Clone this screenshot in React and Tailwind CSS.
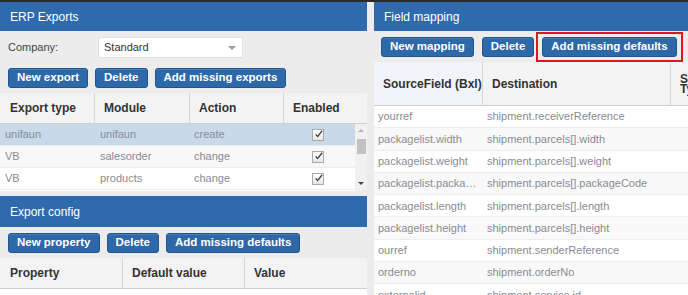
import React from 'react';

const btn =
  'h-[20px] px-[8px] rounded-[3px] bg-[#2d68a9] border border-[#22558f] text-white text-[11.5px] font-bold leading-none flex items-center shadow-[inset_0_1px_0_rgba(255,255,255,0.12)]';

function Button({ children }) {
  return <button className={btn}>{children}</button>;
}

function PanelHeader({ title, tall }) {
  return (
    <div
      className={`${tall ? 'h-[31px]' : 'h-[29px]'} shrink-0 bg-[#2e6aad] text-white text-[12px] flex items-center px-[10px]`}
    >
      {title}
    </div>
  );
}

function Check() {
  return (
    <span className="w-[12px] h-[12px] border border-[#a9a9a9] bg-gradient-to-b from-white to-[#e6e6e6] flex items-center justify-center">
      <svg width="11" height="10" viewBox="0 0 11 10" className="-mt-[2px] ml-[1px]">
        <path d="M2 5.5 L4.5 8 L10 1" fill="none" stroke="#444" strokeWidth="1.6" />
      </svg>
    </span>
  );
}

const exports = [
  { type: 'unifaun', module: 'unifaun', action: 'create', selected: true },
  { type: 'VB', module: 'salesorder', action: 'change' },
  { type: 'VB', module: 'products', action: 'change' },
];

const mappings = [
  ['yourref', 'shipment.receiverReference'],
  ['packagelist.width', 'shipment.parcels[].width'],
  ['packagelist.weight', 'shipment.parcels[].weight'],
  ['packagelist.packageCode', 'shipment.parcels[].packageCode'],
  ['packagelist.length', 'shipment.parcels[].length'],
  ['packagelist.height', 'shipment.parcels[].height'],
  ['ourref', 'shipment.senderReference'],
  ['orderno', 'shipment.orderNo'],
  ['externalid', 'shipment.service.id'],
];

export default function App() {
  return (
    <div
      className="w-[688px] h-[295px] overflow-hidden bg-[#ececec] text-[#333]"
      style={{ fontFamily: '"Liberation Sans", Arial, sans-serif' }}
    >
      <div className="h-[2px] bg-[#2a2a2a]" />
      <div className="flex gap-[7px] h-[293px]">
        {/* Left column */}
        <div className="w-[367px] flex flex-col">
          <PanelHeader title="ERP Exports" />
          <div className="shrink-0 flex items-center mt-[6px] h-[21px]">
            <span className="w-[98px] pl-[8px] text-[11px] text-[#444]">Company:</span>
            <div className="w-[145px] h-[21px] bg-white border border-[#e2e2e2] flex items-center justify-between pl-[5px] pr-[6px] text-[11px] text-[#333]">
              <span>Standard</span>
              <span className="w-0 h-0 border-l-[4px] border-r-[4px] border-t-[4px] border-l-transparent border-r-transparent border-t-[#999]" />
            </div>
          </div>
          <div className="shrink-0 flex gap-[7px] pl-[8px] mt-[10px]">
            <Button>New export</Button>
            <Button>Delete</Button>
            <Button>Add missing exports</Button>
          </div>
          <div className="shrink-0 mt-[5px] h-[31px] bg-[#f3f3f3] border-b border-[#cfcfcf] grid grid-cols-[95px_95px_94px_1fr] text-[12px] font-bold text-[#333]">
            <div className="border-r border-[#d6d6d6] flex items-center pl-[10px]">Export type</div>
            <div className="border-r border-[#d6d6d6] flex items-center pl-[9px]">Module</div>
            <div className="border-r border-[#d6d6d6] flex items-center pl-[9px]">Action</div>
            <div className="flex items-center pl-[9px]">Enabled</div>
          </div>
          <div className="shrink-0 flex h-[67px] bg-white">
            <div className="w-[355px]">
              {exports.map((r, i) => (
                <div
                  key={i}
                  className={`h-[22px] grid grid-cols-[95px_95px_94px_1fr] items-center text-[11px] text-[#878c96] border-b border-[#ececec] ${
                    r.selected ? 'bg-[#c8d9ea]' : i % 2 ? 'bg-[#f8f8f8]' : 'bg-white'
                  }`}
                >
                  <span className="pl-[5px]">{r.type}</span>
                  <span className="pl-[5px]">{r.module}</span>
                  <span className="pl-[4px]">{r.action}</span>
                  <span className="flex justify-center pr-[4px]">
                    <Check />
                  </span>
                </div>
              ))}
            </div>
            <div className="w-[12px] bg-[#f1f1f1] flex flex-col items-center">
              <span className="mt-[5px] w-0 h-0 border-l-[3px] border-r-[3px] border-b-[3px] border-l-transparent border-r-transparent border-b-[#b5b5b5]" />
              <span className="mt-[7px] w-[9px] h-[15px] bg-[#c1c1c1]" />
              <span className="mt-auto mb-[6px] w-0 h-0 border-l-[3px] border-r-[3px] border-t-[3px] border-l-transparent border-r-transparent border-t-[#444]" />
            </div>
          </div>

          <div className="shrink-0 mt-[5px]">
            <PanelHeader title="Export config" tall />
          </div>
          <div className="shrink-0 flex gap-[7px] pl-[8px] mt-[6px]">
            <Button>New property</Button>
            <Button>Delete</Button>
            <Button>Add missing defaults</Button>
          </div>
          <div className="shrink-0 mt-[5px] h-[31px] bg-[#f3f3f3] border-b border-[#cfcfcf] grid grid-cols-[123px_122px_1fr] text-[12px] font-bold text-[#333]">
            <div className="border-r border-[#d6d6d6] flex items-center pl-[10px]">Property</div>
            <div className="border-r border-[#d6d6d6] flex items-center pl-[9px]">Default value</div>
            <div className="flex items-center pl-[9px]">Value</div>
          </div>
          <div className="flex-1 bg-white" />
        </div>

        {/* Right column */}
        <div className="flex-1 flex flex-col overflow-hidden">
          <PanelHeader title="Field mapping" />
          <div className="shrink-0 flex items-center gap-[8px] pl-[7px] mt-[5px] h-[21px]">
            <Button>New mapping</Button>
            <Button>Delete</Button>
            <div className="relative">
              <Button>Add missing defaults</Button>
              <span className="absolute -left-[6px] -right-[6px] -top-[5px] -bottom-[5px] border-2 border-[#e3141b]" />
            </div>
          </div>
          <div className="shrink-0 mt-[5px] h-[44px] w-[360px] bg-[#f3f3f3] border-b border-[#cfcfcf] grid grid-cols-[109px_188px_63px] text-[12px] font-bold text-[#333]">
            <div className="border-r border-[#d6d6d6] bg-[#f1f5f9] flex items-center pl-[9px] overflow-hidden whitespace-nowrap">
              SourceField (Bxl)
            </div>
            <div className="border-r border-[#d6d6d6] flex items-center pl-[9px]">Destination</div>
            <div className="flex items-center pl-[9px] leading-[10px]">Source Type</div>
          </div>
          <div className="shrink-0 bg-white">
            {mappings.map(([src, dst], i) => (
              <div
                key={i}
                className={`h-[22.3px] w-[360px] grid grid-cols-[109px_188px_63px] items-center text-[11px] text-[#878c96] border-b border-[#ededed] ${
                  i % 2 ? 'bg-[#f9f9f9]' : 'bg-white'
                }`}
              >
                <span className="min-w-0 pl-[4px] pr-[2px] truncate">{src}</span>
                <span className="min-w-0 pl-[4px] truncate">{dst}</span>
                <span />
              </div>
            ))}
          </div>
        </div>
      </div>
    </div>
  );
}
